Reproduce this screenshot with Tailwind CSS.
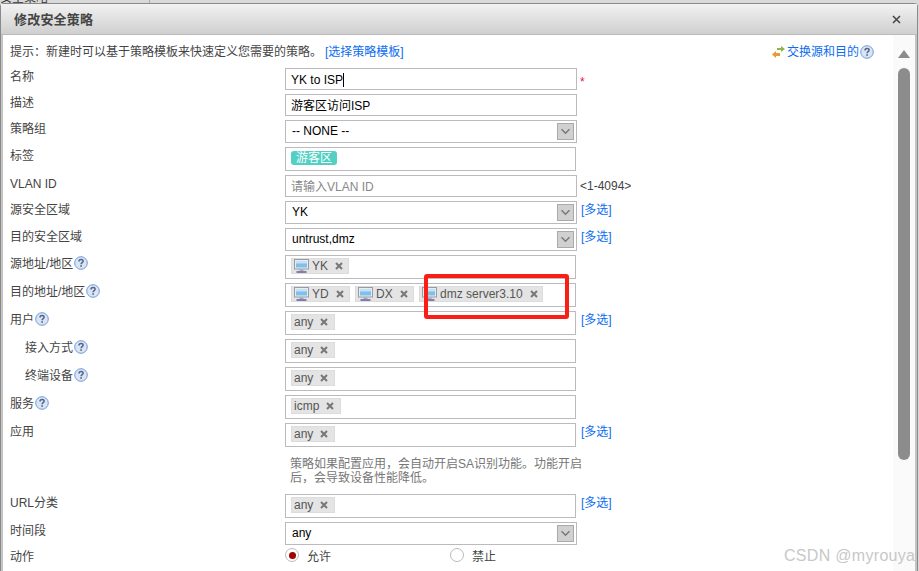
<!DOCTYPE html>
<html lang="zh-CN">
<head>
    <meta charset="UTF-8">
    <title>修改安全策略</title>
    <script src="https://cdn.jsdelivr.net/npm/@tailwindcss/browser@4"></script>
</head>
<body class="bg-white">
    <svg class="hidden">
        <symbol id="help" viewBox="0 0 14 14">
            <circle cx="7" cy="7" r="6.3" fill="#dbe4f2" stroke="#6f9bdc" stroke-width="1"/>
            <path d="M5 5.4C5 4.2 6 3.6 7.1 3.6C8.3 3.6 9.1 4.3 9.1 5.3C9.1 6.6 7.1 6.7 7.1 8.2" fill="none" stroke="#52668a" stroke-width="1.5"/>
            <rect x="6.3" y="9.2" width="1.6" height="1.6" fill="#52668a"/>
        </symbol>
        <symbol id="pc" viewBox="0 0 15 15">
            <rect x="0.5" y="0.5" width="14" height="9.5" fill="#e6eef4" stroke="#9a9aa4"/>
            <rect x="2" y="2" width="11" height="6.5" fill="#7fbfe8"/>
            <rect x="2" y="2" width="11" height="2.5" fill="#c4e2f5"/>
            <rect x="5.5" y="10.5" width="4" height="1.5" fill="#a8a8b0"/>
            <rect x="2.5" y="12" width="10" height="2" fill="#7c80b4"/>
        </symbol>
        <symbol id="x" viewBox="0 0 8 8">
            <path d="M1 1L7 7M7 1L1 7" stroke="#777" stroke-width="2"/>
        </symbol>
        <symbol id="chev" viewBox="0 0 17 17">
            <path d="M4 6L8.5 10.5L13 6" fill="none" stroke="#777" stroke-width="1.6"/>
        </symbol>
    </svg>

    <div class="relative w-[919px] h-[571px] overflow-hidden bg-[#d9d9d9] font-['Liberation_Sans','Noto_Sans_CJK_SC',sans-serif] text-[12px] leading-4 text-[#444]">
        <!-- page behind the dialog -->
        <div class="h-[3px] overflow-hidden flex">
            <div class="w-[150px] border-r border-[#aaa] text-[#333] -mt-[10px]">安全策略</div>
        </div>

        <!-- dialog -->
        <div class="w-[918px] h-[568px] bg-[#f3f3f3] border-t border-x border-[#8a8a8a] rounded-t-[4px] flex flex-col">
            <div class="h-[31px] shrink-0 flex items-center justify-between pl-[13px] pr-[16px] pt-px bg-gradient-to-b from-[#f2f2f2] to-[#cfcfcf] border-b border-[#bbb]">
                <span class="text-[#444] font-bold text-[13px] tracking-[0.2px]">修改安全策略</span>
                <svg class="w-[9px] h-[9px]" viewBox="0 0 9 9"><path d="M1 1L8 8M8 1L1 8" stroke="#444" stroke-width="1.5"/></svg>
            </div>

            <div class="flex-1 flex bg-white border-x-2 border-[#c4c4c4] min-h-0">
                <div class="flex-1 min-w-0 pl-[7px] overflow-hidden">
                    <!-- tip -->
                    <div class="h-[33px] pt-[8px] flex items-start">
                        <span class="mt-px">提示：新建时可以基于策略模板来快速定义您需要的策略。</span>
                        <a class="ml-[3px] mt-px text-[#0b6cf0]">[选择策略模板]</a>
                        <div class="ml-auto mr-[19px] mt-px flex items-center">
                            <svg class="w-[15px] h-[14px]" viewBox="0 0 15 14">
                                <path d="M6 3H10V1L14 4L10 7V5H6Z" fill="#8cb84a"/>
                                <path d="M9 8H5V6L1 9.5L5 13V11H9Z" fill="#eb9a35"/>
                            </svg>
                            <a class="ml-px text-[#0b6cf0]">交换源和目的</a>
                            <svg class="w-[14px] h-[14px] ml-px"><use href="#help"/></svg>
                        </div>
                    </div>

                    <div class="flex h-[26px]">
                        <div class="w-[275px] pt-px">名称</div>
                        <div class="w-[292px] h-[22px] border border-[#bcbabf] flex items-center pl-[5px] pt-px text-black">YK to ISP<span class="w-px h-[14px] bg-black"></span></div>
                        <span class="ml-[3px] mt-[6px] text-[#f0143c]">*</span>
                    </div>
                    <div class="flex h-[26px]">
                        <div class="w-[275px] pt-px">描述</div>
                        <div class="w-[292px] h-[22px] border border-[#bcbabf] flex items-center pl-[5px] pt-px text-black">游客区访问ISP</div>
                    </div>
                    <div class="flex h-[27px]">
                        <div class="w-[275px] pt-px">策略组</div>
                        <div class="w-[292px] h-[23px] border border-[#bcbabf] flex items-center justify-between pl-[6px] pr-[2px] text-black">
                            <span class="-mt-px">-- NONE --</span>
                            <span class="w-[17px] h-[17px] bg-[#d0d0d0] border border-[#aaa] flex"><svg class="w-[15px] h-[15px]"><use href="#chev"/></svg></span>
                        </div>
                    </div>
                    <div class="flex h-[28px]">
                        <div class="w-[275px] pt-px">标签</div>
                        <div class="w-[291px] h-[24px] border border-[#bcbabf] pl-[5px] pt-[3px]">
                            <span class="block w-[46px] h-[14px] leading-[14px] rounded-[3px] bg-[#52d0c4] text-white text-center">游客区</span>
                        </div>
                    </div>
                    <div class="flex h-[26px]">
                        <div class="w-[275px] pt-px">VLAN ID</div>
                        <div class="w-[292px] h-[22px] border border-[#bcbabf] flex items-center pl-[5px] pt-px text-[#888]">请输入VLAN ID</div>
                        <span class="ml-[3px] mt-[3px]">&lt;1-4094&gt;</span>
                    </div>
                    <div class="flex h-[27px]">
                        <div class="w-[275px] pt-px">源安全区域</div>
                        <div class="w-[292px] h-[23px] border border-[#bcbabf] flex items-center justify-between pl-[6px] pr-[2px] text-black">
                            <span class="-mt-px">YK</span>
                            <span class="w-[17px] h-[17px] bg-[#d0d0d0] border border-[#aaa] flex"><svg class="w-[15px] h-[15px]"><use href="#chev"/></svg></span>
                        </div>
                        <a class="ml-[4px] mt-px text-[#0b6cf0]">[多选]</a>
                    </div>
                    <div class="flex h-[27px]">
                        <div class="w-[275px] pt-px">目的安全区域</div>
                        <div class="w-[292px] h-[23px] border border-[#bcbabf] flex items-center justify-between pl-[6px] pr-[2px] text-black">
                            <span class="-mt-px">untrust,dmz</span>
                            <span class="w-[17px] h-[17px] bg-[#d0d0d0] border border-[#aaa] flex"><svg class="w-[15px] h-[15px]"><use href="#chev"/></svg></span>
                        </div>
                        <a class="ml-[4px] mt-px text-[#0b6cf0]">[多选]</a>
                    </div>
                    <div class="flex h-[28px]">
                        <div class="w-[275px] pt-px flex items-start">源地址/地区<svg class="w-[14px] h-[14px] ml-px"><use href="#help"/></svg></div>
                        <div class="w-[291px] h-[24px] border border-[#bcbabf] flex gap-[5px] pl-[5px] pt-[2px]">
                            <span class="h-[16px] w-[58px] bg-[#e4e4e4] border border-[#dcdcdc] flex items-center pl-[2px] text-[#555]"><svg class="w-[15px] h-[15px] mr-[3px]"><use href="#pc"/></svg>YK<svg class="w-[8px] h-[8px] ml-[7px]"><use href="#x"/></svg></span>
                        </div>
                    </div>
                    <div class="flex h-[28px]">
                        <div class="w-[275px] pt-px flex items-start">目的地址/地区<svg class="w-[14px] h-[14px] ml-px"><use href="#help"/></svg></div>
                        <div class="w-[291px] h-[24px] border border-[#bcbabf] flex gap-[5px] pl-[5px] pt-[2px]">
                            <span class="h-[16px] w-[59px] bg-[#e4e4e4] border border-[#dcdcdc] flex items-center pl-[2px] text-[#555]"><svg class="w-[15px] h-[15px] mr-[3px]"><use href="#pc"/></svg>YD<svg class="w-[8px] h-[8px] ml-[7px]"><use href="#x"/></svg></span>
                            <span class="h-[16px] w-[59px] bg-[#e4e4e4] border border-[#dcdcdc] flex items-center pl-[2px] text-[#555]"><svg class="w-[15px] h-[15px] mr-[3px]"><use href="#pc"/></svg>DX<svg class="w-[8px] h-[8px] ml-[7px]"><use href="#x"/></svg></span>
                            <span class="h-[16px] w-[124px] bg-[#e4e4e4] border border-[#dcdcdc] flex items-center pl-[2px] text-[#555]"><svg class="w-[15px] h-[15px] mr-[3px]"><use href="#pc"/></svg>dmz server3.10<svg class="w-[8px] h-[8px] ml-[7px]"><use href="#x"/></svg></span>
                        </div>
                    </div>
                    <div class="flex h-[28px]">
                        <div class="w-[275px] pt-px flex items-start">用户<svg class="w-[14px] h-[14px] ml-px"><use href="#help"/></svg></div>
                        <div class="w-[291px] h-[24px] border border-[#bcbabf] pl-[5px] pt-[2px]">
                            <span class="h-[16px] w-[44px] bg-[#e4e4e4] border border-[#dcdcdc] flex items-center pl-[2px] text-[#555]">any<svg class="w-[8px] h-[8px] ml-[7px]"><use href="#x"/></svg></span>
                        </div>
                        <a class="ml-[5px] mt-px text-[#0b6cf0]">[多选]</a>
                    </div>
                    <div class="flex h-[28px]">
                        <div class="w-[275px] pl-[15px] pt-px flex items-start">接入方式<svg class="w-[14px] h-[14px] ml-px"><use href="#help"/></svg></div>
                        <div class="w-[291px] h-[24px] border border-[#bcbabf] pl-[5px] pt-[2px]">
                            <span class="h-[16px] w-[44px] bg-[#e4e4e4] border border-[#dcdcdc] flex items-center pl-[2px] text-[#555]">any<svg class="w-[8px] h-[8px] ml-[7px]"><use href="#x"/></svg></span>
                        </div>
                    </div>
                    <div class="flex h-[28px]">
                        <div class="w-[275px] pl-[15px] pt-px flex items-start">终端设备<svg class="w-[14px] h-[14px] ml-px"><use href="#help"/></svg></div>
                        <div class="w-[291px] h-[24px] border border-[#bcbabf] pl-[5px] pt-[2px]">
                            <span class="h-[16px] w-[44px] bg-[#e4e4e4] border border-[#dcdcdc] flex items-center pl-[2px] text-[#555]">any<svg class="w-[8px] h-[8px] ml-[7px]"><use href="#x"/></svg></span>
                        </div>
                    </div>
                    <div class="flex h-[28px]">
                        <div class="w-[275px] pt-px flex items-start">服务<svg class="w-[14px] h-[14px] ml-px"><use href="#help"/></svg></div>
                        <div class="w-[291px] h-[24px] border border-[#bcbabf] pl-[5px] pt-[2px]">
                            <span class="h-[16px] w-[50px] bg-[#e4e4e4] border border-[#dcdcdc] flex items-center pl-[2px] text-[#555]">icmp<svg class="w-[8px] h-[8px] ml-[7px]"><use href="#x"/></svg></span>
                        </div>
                    </div>
                    <div class="flex h-[28px]">
                        <div class="w-[275px] pt-px">应用</div>
                        <div class="w-[291px] h-[24px] border border-[#bcbabf] pl-[5px] pt-[2px]">
                            <span class="h-[16px] w-[44px] bg-[#e4e4e4] border border-[#dcdcdc] flex items-center pl-[2px] text-[#555]">any<svg class="w-[8px] h-[8px] ml-[7px]"><use href="#x"/></svg></span>
                        </div>
                        <a class="ml-[5px] mt-px text-[#0b6cf0]">[多选]</a>
                    </div>
                    <div class="h-[43px] pl-[280px] pt-[6px] leading-[14px] text-[#777]">策略如果配置应用，会自动开启SA识别功能。功能开启<br>后，会导致设备性能降低。</div>
                    <div class="flex h-[28px]">
                        <div class="w-[275px] pt-px">URL分类</div>
                        <div class="w-[291px] h-[24px] border border-[#bcbabf] pl-[5px] pt-[2px]">
                            <span class="h-[16px] w-[44px] bg-[#e4e4e4] border border-[#dcdcdc] flex items-center pl-[2px] text-[#555]">any<svg class="w-[8px] h-[8px] ml-[7px]"><use href="#x"/></svg></span>
                        </div>
                        <a class="ml-[5px] mt-px text-[#0b6cf0]">[多选]</a>
                    </div>
                    <div class="flex h-[26px]">
                        <div class="w-[275px] pt-px">时间段</div>
                        <div class="w-[292px] h-[23px] border border-[#bcbabf] flex items-center justify-between pl-[6px] pr-[2px] text-black">
                            <span class="-mt-px">any</span>
                            <span class="w-[17px] h-[17px] bg-[#d0d0d0] border border-[#aaa] flex"><svg class="w-[15px] h-[15px]"><use href="#chev"/></svg></span>
                        </div>
                    </div>
                    <div class="flex h-[23px]">
                        <div class="w-[275px] pt-px">动作</div>
                        <div class="w-[165px] flex items-start">
                            <span class="w-[14px] h-[14px] rounded-full border border-[#bbb] flex items-center justify-center"><span class="w-[7px] h-[7px] rounded-full bg-[#a00000]"></span></span>
                            <span class="ml-[8px] pt-px">允许</span>
                        </div>
                        <div class="flex items-start">
                            <span class="w-[14px] h-[14px] rounded-full border border-[#bbb]"></span>
                            <span class="ml-[8px] pt-px">禁止</span>
                        </div>
                    </div>
                </div>

                <!-- scrollbar -->
                <div class="w-[22px] shrink-0 bg-[#fafafa] pl-[5px] pt-[15px]">
                    <div class="w-0 h-0 border-x-[6px] border-x-transparent border-b-[8px] border-b-[#8c8c8c]"></div>
                    <div class="w-[12px] h-[392px] mt-[10px] bg-[#8c8c8c] rounded-[6px]"></div>
                </div>
            </div>
        </div>

        <!-- annotation drawn on top of the screenshot -->
        <div class="absolute left-[424px] top-[274px] w-[145px] h-[45px] border-[4px] border-[#fb1e14] rounded-[3px]"></div>
        <div class="absolute left-[784px] top-[547px] whitespace-nowrap text-[16px] leading-[18px] tracking-[0.3px] text-[#c8c8c8]">CSDN @myrouya</div>
    </div>
</body>
</html>
